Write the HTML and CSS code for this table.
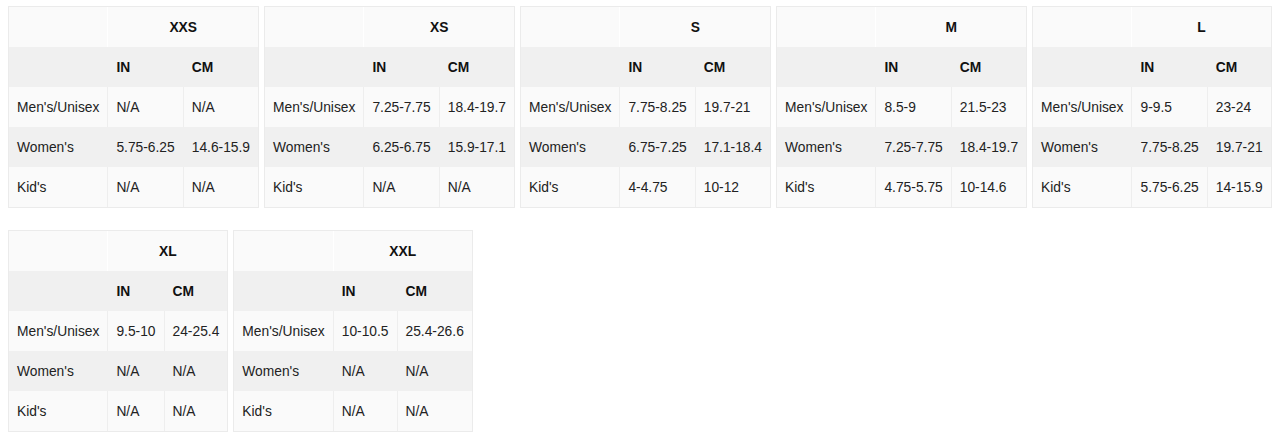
FILE: index.html
```html
<!DOCTYPE html>
<html>
<head>
<meta charset="utf-8">
<link rel="stylesheet" href="styles.css">
</head>
<body>
<div class="charts">
  <table class="size">
    <tr class="h1"><th></th><th colspan="2" class="sz">XXS</th></tr>
    <tr class="h2"><th></th><th>IN</th><th>CM</th></tr>
    <tr class="odd"><td>Men's/Unisex</td><td>N/A</td><td>N/A</td></tr>
    <tr class="even"><td>Women's</td><td>5.75-6.25</td><td>14.6-15.9</td></tr>
    <tr class="odd"><td>Kid's</td><td>N/A</td><td>N/A</td></tr>
  </table>
  <table class="size">
    <tr class="h1"><th></th><th colspan="2" class="sz">XS</th></tr>
    <tr class="h2"><th></th><th>IN</th><th>CM</th></tr>
    <tr class="odd"><td>Men's/Unisex</td><td>7.25-7.75</td><td>18.4-19.7</td></tr>
    <tr class="even"><td>Women's</td><td>6.25-6.75</td><td>15.9-17.1</td></tr>
    <tr class="odd"><td>Kid's</td><td>N/A</td><td>N/A</td></tr>
  </table>
  <table class="size">
    <tr class="h1"><th></th><th colspan="2" class="sz">S</th></tr>
    <tr class="h2"><th></th><th>IN</th><th>CM</th></tr>
    <tr class="odd"><td>Men's/Unisex</td><td>7.75-8.25</td><td>19.7-21</td></tr>
    <tr class="even"><td>Women's</td><td>6.75-7.25</td><td>17.1-18.4</td></tr>
    <tr class="odd"><td>Kid's</td><td>4-4.75</td><td>10-12</td></tr>
  </table>
  <table class="size">
    <tr class="h1"><th></th><th colspan="2" class="sz">M</th></tr>
    <tr class="h2"><th></th><th>IN</th><th>CM</th></tr>
    <tr class="odd"><td>Men's/Unisex</td><td>8.5-9</td><td>21.5-23</td></tr>
    <tr class="even"><td>Women's</td><td>7.25-7.75</td><td>18.4-19.7</td></tr>
    <tr class="odd"><td>Kid's</td><td>4.75-5.75</td><td>10-14.6</td></tr>
  </table>
  <table class="size">
    <tr class="h1"><th></th><th colspan="2" class="sz">L</th></tr>
    <tr class="h2"><th></th><th>IN</th><th>CM</th></tr>
    <tr class="odd"><td>Men's/Unisex</td><td>9-9.5</td><td>23-24</td></tr>
    <tr class="even"><td>Women's</td><td>7.75-8.25</td><td>19.7-21</td></tr>
    <tr class="odd"><td>Kid's</td><td>5.75-6.25</td><td>14-15.9</td></tr>
  </table>
  <table class="size">
    <tr class="h1"><th></th><th colspan="2" class="sz">XL</th></tr>
    <tr class="h2"><th></th><th>IN</th><th>CM</th></tr>
    <tr class="odd"><td>Men's/Unisex</td><td>9.5-10</td><td>24-25.4</td></tr>
    <tr class="even"><td>Women's</td><td>N/A</td><td>N/A</td></tr>
    <tr class="odd"><td>Kid's</td><td>N/A</td><td>N/A</td></tr>
  </table>
  <table class="size">
    <tr class="h1"><th></th><th colspan="2" class="sz">XXL</th></tr>
    <tr class="h2"><th></th><th>IN</th><th>CM</th></tr>
    <tr class="odd"><td>Men's/Unisex</td><td>10-10.5</td><td>25.4-26.6</td></tr>
    <tr class="even"><td>Women's</td><td>N/A</td><td>N/A</td></tr>
    <tr class="odd"><td>Kid's</td><td>N/A</td><td>N/A</td></tr>
  </table>
</div>
</body>
</html>
```
FILE: styles.css
```css
html, body {
  background: #ffffff;
}
body {
  margin: 6px 8px;
  font-family: "Liberation Sans", Arial, Helvetica, sans-serif;
  font-size: 13.8px;
  color: #222;
}
.charts {
  display: flex;
  flex-wrap: wrap;
  align-items: flex-start;
  column-gap: 5px;
  row-gap: 22px;
}
.size {
  border-collapse: separate;
  border-spacing: 0;
  border: 1px solid #ebebeb;
}
.size th, .size td {
  padding: 11px 8px 9px;
  line-height: 20px;
  text-align: left;
  white-space: nowrap;
}
.size td + td {
  border-left: 1px solid #eeeeee;
}
.size th + th {
  border-left: 1px solid #ffffff;
}
.size th {
  font-weight: bold;
  color: #111;
}
.size th.sz {
  text-align: center;
}
.h1 th { background: #fafafa; }
.h2 th { background: #f0f0f0; }
.h2 th + th { border-left-color: #f0f0f0; }
.odd td { background: #fafafa; }
.even td { background: #f0f0f0; }
.even td + td { border-left-color: #f0f0f0; }
```
